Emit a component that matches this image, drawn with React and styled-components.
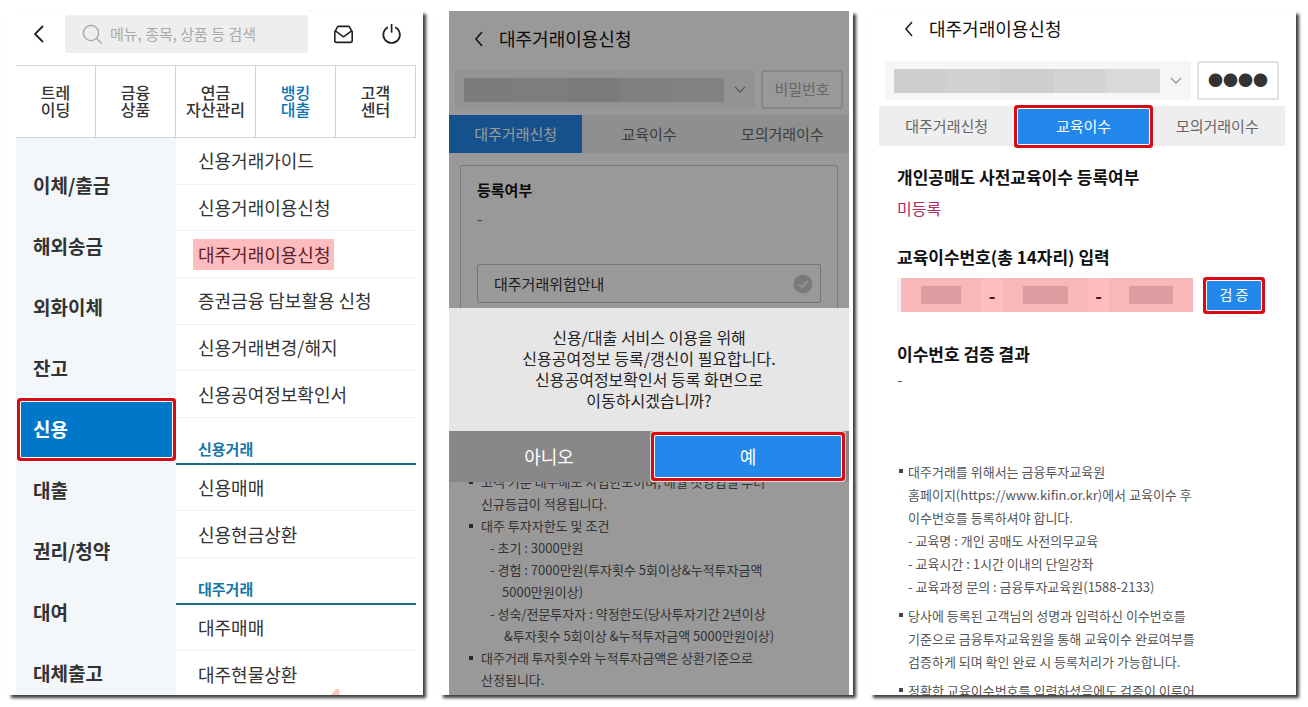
import styled, { createGlobalStyle, css } from "styled-components";

const GlobalStyle = createGlobalStyle`
  * {
    box-sizing: border-box;
  }

  body {
    margin: 0;
    background: #ffffff;
  }

  body, button, input, select {
    font-family: "Noto Sans CJK KR", "Noto Sans", sans-serif;
  }

  button {
    border: none;
    background: none;
    padding: 0;
    cursor: pointer;
  }

  a {
    color: inherit;
    text-decoration: none;
  }

  h1, h2, p, ul {
    margin: 0;
    padding: 0;
    list-style: none;
    font-weight: 400;
  }

  svg {
    display: block;
  }
`;

// red frame around the button to press next
const marked = css`
  border-radius: 1px;
  box-shadow: 0 0 0 1px #ffffff, 0 0 0 4px #d80b12, 0 0 0 5px #ffffffb0;
`;

const StyledPage = styled.main`
  display: grid;
  grid-template-columns: 415fr 413fr 426fr;
  grid-template-rows: minmax(0, 1fr);
  gap: 17px;
  height: 100vh;
  padding: 11px 12px 12px 8px;
`;

const StyledPanel = styled.section`
  position: relative;
  min-width: 0;
  padding: ${(props) => props.$padding};
  background: #ffffff;
  box-shadow: 3px 3px 3px #3c3c3c;
`;

const StyledScreen = styled.div`
  position: relative;
  height: 100%;
  overflow: hidden;
`;

/* menu screen */

const StyledSearchBar = styled.header`
  display: flex;
  align-items: center;
  gap: 18px;
  padding: 4px 14px 12px 15px;
`;

const StyledSearch = styled.label`
  display: flex;
  flex: 1;
  align-items: center;
  gap: 7px;
  min-width: 0;
  height: 38px;
  padding: 0 17px;
  border-radius: 3px;
  background: #eeeeee;
`;

const StyledSearchInput = styled.input`
  flex: 1;
  min-width: 0;
  padding: 0 0 2px;
  border: none;
  outline: none;
  background: none;
  font-size: 15px;

  &::placeholder {
    color: #aaaaaa;
  }
`;

const StyledIcons = styled.div`
  display: flex;
  gap: 26px;
  margin-left: 6px;
`;

const StyledNav = styled.nav`
  display: grid;
  grid-template-columns: repeat(5, 1fr);
  border: 1px solid #d4d4d4;
  border-width: 1px 0;
`;

const StyledNavLink = styled.a`
  padding: 18px 0 19px;
  border-right: 1px solid #d4d4d4;
  text-align: center;
  white-space: pre-line;
  font-size: 16px;
  font-weight: 500;
  line-height: 17px;
  color: ${(props) => (props.$active ? "#0b75b3" : "#333333")};
`;

const StyledMenu = styled.div`
  display: grid;
  grid-template-columns: 2fr 3fr;
`;

const StyledCategories = styled.div`
  padding-top: 17px;
  background: #f3f7fa;
`;

const StyledCategory = styled.button`
  display: block;
  width: 100%;
  height: 61px;
  padding: 0 0 3px 17px;
  text-align: left;
  font-size: 19px;
  font-weight: 700;
  color: #333333;

  ${(props) =>
    props.$active &&
    css`
      width: calc(100% - 9px);
      height: 55px;
      margin: 3px 4px 3px 5px;
      padding-left: 12px;
      background: #0077c8;
      color: #ffffff;
      ${marked}
    `}
`;

const StyledItems = styled.div`
  display: grid;
  grid-template-rows: repeat(12, 1fr);
  height: 560px;
`;

const StyledItem = styled.a`
  display: flex;
  align-items: center;
  padding-left: 22px;
  border-bottom: 1px solid #f1f1f1;
  font-size: 18px;
  line-height: 31px;
  color: #333333;
`;

const StyledPinkMark = styled.span`
  margin-left: -5px;
  padding: 0 4px 0 5px;
  background: #ffbcbf;
  color: #5c1f27;
`;

const StyledItemHeading = styled.h2`
  padding: 20px 0 0 22px;
  border-bottom: 2px solid #1d6c8c;
  font-size: 15px;
  font-weight: 700;
  line-height: 22px;
  color: #1477a8;
`;

const StyledFloatTip = styled.svg`
  position: absolute;
  right: 75px;
  bottom: 0;
`;

/* short selling screens */

const StyledHeader = styled.header`
  display: flex;
  align-items: center;
  gap: 15px;
  height: ${(props) => props.$height};
  margin-bottom: ${(props) => props.$gap};
  padding-left: 25px;
`;

const StyledTitle = styled.h1`
  padding-bottom: 2px;
  font-size: 18px;
  line-height: 24px;
  color: #111111;
`;

const StyledAccountRow = styled.div`
  display: flex;
  gap: 6px;
  height: 39px;
  margin: 0 6px 6px;
`;

const StyledAccount = styled.label`
  display: flex;
  flex: 1;
  align-items: center;
  gap: 10px;
  min-width: 0;
  padding: 0 9px;
  border-radius: 3px;
  background: #f6f6f6;
`;

const StyledAccountSelect = styled.select`
  flex: 1;
  min-width: 0;
  height: 24px;
  border: none;
  appearance: none;
  background: linear-gradient(
    90deg,
    #cfcfcf 20%,
    #d1d1d1 20% 40%,
    #cecece 40% 60%,
    #d4d4d4 60% 80%,
    #d9d9d9 80%
  );
`;

const StyledPassword = styled.input`
  width: 82px;
  padding: 0 0 2px;
  border: 2px solid #e2e2e2;
  border-radius: 3px;
  background: #ffffff;
  text-align: center;
  font-size: 15px;
  color: #333333;

  &::placeholder {
    color: #aaaaaa;
  }
`;

const StyledTabs = styled.div`
  display: grid;
  grid-template-columns: repeat(3, 1fr);
  height: ${(props) => props.$height};
  background: #eeeeee;
`;

const StyledTab = styled.button`
  padding-bottom: 2px;
  font-size: 15px;
  color: #666666;

  ${(props) =>
    props.$active &&
    css`
      background: #2388ec;
      color: #ffffff;
    `}

  ${(props) =>
    props.$marked &&
    css`
      margin: 3px 1px 2px 4px;
      ${marked}
    `}
`;

const StyledCard = styled.div`
  min-height: 280px;
  margin: 12px 11px 26px;
  padding: 12px 16px;
  border: 1px solid #cccccc;
  border-radius: 2px;
`;

const StyledCardTitle = styled.h2`
  font-size: 15px;
  font-weight: 700;
  line-height: 24px;
  color: #111111;
`;

const StyledValue = styled.p`
  margin-top: ${(props) => props.$space};
  font-size: 16px;
  line-height: 24px;
  color: ${(props) => props.$color || "#666666"};
`;

const StyledAgreement = styled.button`
  display: flex;
  align-items: center;
  justify-content: space-between;
  width: 100%;
  height: 39px;
  margin-top: 34px;
  padding: 0 7px 0 16px;
  border: 1px solid #c4c4c4;
  border-radius: 2px;
  font-size: 15px;
  line-height: 20px;
  color: #333333;
`;

const StyledNotes = styled.ul`
  padding: ${(props) => props.$padding};
  font-size: 13px;
  line-height: ${(props) => props.$line};
  color: #555555;
`;

const StyledNote = styled.li`
  display: flex;
  gap: ${(props) => props.$gap};
  margin-bottom: ${(props) => props.$space || "0"};
  white-space: nowrap;

  &::before {
    content: "";
    flex: none;
    width: 4px;
    height: 4px;
    margin-top: 9px;
    background: #444444;
  }
`;

const StyledSubLine = styled.div`
  padding-left: ${(props) => props.$indent || "0"};
`;

const StyledOverlay = styled.div`
  position: absolute;
  inset: 0;
  display: flex;
  align-items: center;
  padding-top: 84px;
  background: rgba(0, 0, 0, 0.4);
`;

const StyledDialog = styled.div`
  width: 100%;
  background: #e6e6e6;
`;

const StyledMessage = styled.p`
  padding: 19px 0 20px;
  text-align: center;
  white-space: pre-line;
  font-size: 16px;
  line-height: 21px;
  color: #222222;
`;

const StyledDialogButtons = styled.div`
  display: grid;
  grid-template-columns: 1fr 1fr;
  height: 51px;
  background: #888888;
`;

const StyledDialogButton = styled.button`
  padding-bottom: 2px;
  font-size: 18px;
  color: #ffffff;

  ${(props) =>
    props.$primary &&
    css`
      margin: 5px 8px 5px 6px;
      background: #2388ec;
      ${marked}
    `}
`;

const StyledForm = styled.div`
  padding: 0 18px;
`;

const StyledFormTitle = styled.h2`
  margin-top: ${(props) => props.$space};
  font-size: 17px;
  font-weight: 700;
  line-height: 26px;
  color: #111111;
`;

const StyledCodeRow = styled.div`
  display: flex;
  align-items: center;
  justify-content: space-between;
  margin-top: 8px;
`;

const StyledCode = styled.div`
  display: grid;
  grid-template-columns: 80fr 22fr 85fr 21fr 84fr;
  align-items: center;
  width: 296px;
  height: 34px;
  border-left: 4px solid #f2f2f2;
  background: #ffbdbd;
  text-align: center;
  font-size: 18px;
  font-weight: 700;
  line-height: 34px;
  color: #4a1015;
`;

const StyledCodeInput = styled.input`
  width: 100%;
  height: 34px;
  border: solid #f8b8b9;
  border-width: 8px 20px;
  border-radius: 0;
  background: #dd9da0;
`;

const StyledVerify = styled.button`
  width: 54px;
  height: 29px;
  margin-right: 6px;
  padding-bottom: 2px;
  background: #2388ec;
  font-size: 14px;
  color: #ffffff;
  ${marked}
`;

const navLinks = ["트레\n이딩", "금융\n상품", "연금\n자산관리", "뱅킹\n대출", "고객\n센터"];

const categories = [
  "이체/출금",
  "해외송금",
  "외화이체",
  "잔고",
  "신용",
  "대출",
  "권리/청약",
  "대여",
  "대체출고",
];

const items = [
  { text: "신용거래가이드" },
  { text: "신용거래이용신청" },
  { text: "대주거래이용신청", marked: true },
  { text: "증권금융 담보활용 신청" },
  { text: "신용거래변경/해지" },
  { text: "신용공여정보확인서" },
  { text: "신용거래", heading: true },
  { text: "신용매매" },
  { text: "신용현금상환" },
  { text: "대주거래", heading: true },
  { text: "대주매매" },
  { text: "대주현물상환" },
];

const tabs = ["대주거래신청", "교육이수", "모의거래이수"];

function Chevron({ width, height, points, color = "#222222", stroke = 1.6 }) {
  return (
    <svg width={width} height={height} fill="none" stroke={color} strokeWidth={stroke}>
      <polyline points={points} />
    </svg>
  );
}

function MenuPanel() {
  return (
    <StyledPanel $padding="0 7px 0 8px">
      <StyledScreen>
        <StyledSearchBar>
          <button aria-label="뒤로">
            <Chevron width={16} height={20} points="12,2 4,10 12,18" stroke={1.8} />
          </button>
          <StyledSearch>
            <svg width="21" height="20" fill="none" stroke="#a6a6a6" strokeWidth="1.4">
              <circle cx="9" cy="9" r="7.6" />
              <path d="M14.4 14.4 L20 19.4" />
            </svg>
            <StyledSearchInput placeholder="메뉴, 종목, 상품 등 검색" />
          </StyledSearch>
          <StyledIcons>
            <button aria-label="메시지">
              <svg width="22" height="22" fill="none" stroke="#222222" strokeWidth="1.6" strokeLinejoin="round">
                <path d="M3 8.6 L5.4 4.2 Q5.8 3.4 6.8 3.4 H16.2 Q17.2 3.4 17.6 4.2 L20 8.6" />
                <path d="M2.8 9.2 Q2.8 7.6 4.4 8.6 L11.5 13.8 L18.6 8.6 Q20.2 7.6 20.2 9.2 V17.6 Q20.2 19.4 18.4 19.4 H4.6 Q2.8 19.4 2.8 17.6 Z" />
              </svg>
            </button>
            <button aria-label="종료">
              <svg width="22" height="22" fill="none" stroke="#222222" strokeWidth="1.7">
                <path d="M8 4.2 A8.3 8.3 0 1 0 15.2 4.2" />
                <path d="M11.6 1 V9.6" />
              </svg>
            </button>
          </StyledIcons>
        </StyledSearchBar>
        <StyledNav>
          {navLinks.map((text, i) => (
            <StyledNavLink key={text} href="#" $active={i === 3}>
              {text}
            </StyledNavLink>
          ))}
        </StyledNav>
        <StyledMenu>
          <StyledCategories>
            {categories.map((text) => (
              <StyledCategory key={text} $active={text === "신용"}>
                {text}
              </StyledCategory>
            ))}
          </StyledCategories>
          <StyledItems>
            {items.map((item) =>
              item.heading ? (
                <StyledItemHeading key={item.text}>{item.text}</StyledItemHeading>
              ) : (
                <StyledItem key={item.text} href="#">
                  {item.marked ? (
                    <StyledPinkMark>{item.text}</StyledPinkMark>
                  ) : (
                    item.text
                  )}
                </StyledItem>
              )
            )}
          </StyledItems>
        </StyledMenu>
        <StyledFloatTip width="10" height="6" fill="#f6c9bd">
          <path d="M0 6 L5 0 L8 0 L9 6 Z" />
        </StyledFloatTip>
      </StyledScreen>
    </StyledPanel>
  );
}

function TopArea({ headerHeight, headerGap, tabHeight, active, frame, password }) {
  return (
    <>
      <StyledHeader $height={headerHeight} $gap={headerGap}>
        <button aria-label="뒤로">
          <Chevron width={10} height={16} points="8,1 2,8 8,15" />
        </button>
        <StyledTitle>대주거래이용신청</StyledTitle>
      </StyledHeader>
      <StyledAccountRow>
        <StyledAccount>
          <StyledAccountSelect aria-label="계좌" />
          <Chevron width={12} height={8} points="1,1 6,6 11,1" color="#999999" stroke={1.4} />
        </StyledAccount>
        <StyledPassword
          aria-label="비밀번호"
          placeholder="비밀번호"
          defaultValue={password}
        />
      </StyledAccountRow>
      <StyledTabs $height={tabHeight}>
        {tabs.map((text, i) => (
          <StyledTab key={text} $active={i === active} $marked={frame && i === active}>
            {text}
          </StyledTab>
        ))}
      </StyledTabs>
    </>
  );
}

function ApplyPanel() {
  return (
    <StyledPanel $padding="0 4px 0 9px">
      <StyledScreen>
        <TopArea headerHeight="56px" headerGap="3px" tabHeight="38px" active={0} />
        <StyledCard>
          <StyledCardTitle>등록여부</StyledCardTitle>
          <StyledValue $space="4px">-</StyledValue>
          <StyledAgreement>
            대주거래위험안내
            <svg width="20" height="20" fill="none">
              <circle cx="10" cy="10" r="9.5" fill="#cccccc" />
              <path d="M5.5 10.2 L8.8 13.4 L14.6 7" stroke="#f4f4f4" strokeWidth="1.8" />
            </svg>
          </StyledAgreement>
        </StyledCard>
        <StyledNotes $padding="0 0 0 20px" $line="22px">
          <StyledNote $gap="8px">
            <div>
              고객 기준 대주매도 차입한도이며, 매월 첫영업일 부터
              <br />
              신규등급이 적용됩니다.
            </div>
          </StyledNote>
          <StyledNote $gap="8px">
            <div>
              대주 투자자한도 및 조건
              <StyledSubLine $indent="9px">- 초기 : 3000만원</StyledSubLine>
              <StyledSubLine $indent="9px">
                - 경험 : 7000만원(투자횟수 5회이상&누적투자금액
              </StyledSubLine>
              <StyledSubLine $indent="21px">5000만원이상)</StyledSubLine>
              <StyledSubLine $indent="9px">
                - 성숙/전문투자자 : 약정한도(당사투자기간 2년이상
              </StyledSubLine>
              <StyledSubLine $indent="23px">
                &투자횟수 5회이상 &누적투자금액 5000만원이상)
              </StyledSubLine>
            </div>
          </StyledNote>
          <StyledNote $gap="8px">
            <div>
              대주거래 투자횟수와 누적투자금액은 상환기준으로
              <br />
              산정됩니다.
            </div>
          </StyledNote>
        </StyledNotes>
        <StyledOverlay>
          <StyledDialog role="dialog">
            <StyledMessage>
              {"신용/대출 서비스 이용을 위해\n신용공여정보 등록/갱신이 필요합니다.\n신용공여정보확인서 등록 화면으로\n이동하시겠습니까?"}
            </StyledMessage>
            <StyledDialogButtons>
              <StyledDialogButton>아니오</StyledDialogButton>
              <StyledDialogButton $primary>예</StyledDialogButton>
            </StyledDialogButtons>
          </StyledDialog>
        </StyledOverlay>
      </StyledScreen>
    </StyledPanel>
  );
}

function EducationPanel() {
  return (
    <StyledPanel $padding="0 11px 0 9px">
      <StyledScreen>
        <TopArea
          headerHeight="36px"
          headerGap="14px"
          tabHeight="40px"
          active={1}
          frame
          password="●●●●"
        />
        <StyledForm>
          <StyledFormTitle $space="18px">개인공매도 사전교육이수 등록여부</StyledFormTitle>
          <StyledValue $space="6px" $color="#b02a60">미등록</StyledValue>
          <StyledFormTitle $space="24px">교육이수번호(총 14자리) 입력</StyledFormTitle>
          <StyledCodeRow>
            <StyledCode>
              <StyledCodeInput aria-label="교육이수번호 1" />
              <span>-</span>
              <StyledCodeInput aria-label="교육이수번호 2" />
              <span>-</span>
              <StyledCodeInput aria-label="교육이수번호 3" />
            </StyledCode>
            <StyledVerify>검 증</StyledVerify>
          </StyledCodeRow>
          <StyledFormTitle $space="29px">이수번호 검증 결과</StyledFormTitle>
          <StyledValue $space="0">-</StyledValue>
        </StyledForm>
        <StyledNotes $padding="69px 0 0 20px" $line="23px">
          <StyledNote $gap="5px" $space="6px">
            <div>
              대주거래를 위해서는 금융투자교육원
              <br />
              홈페이지(https://www.kifin.or.kr)에서 교육이수 후
              <br />
              이수번호를 등록하셔야 합니다.
              <StyledSubLine>- 교육명 : 개인 공매도 사전의무교육</StyledSubLine>
              <StyledSubLine>- 교육시간 : 1시간 이내의 단일강좌</StyledSubLine>
              <StyledSubLine>- 교육과정 문의 : 금융투자교육원(1588-2133)</StyledSubLine>
            </div>
          </StyledNote>
          <StyledNote $gap="5px" $space="6px">
            <div>
              당사에 등록된 고객님의 성명과 입력하신 이수번호를
              <br />
              기준으로 금융투자교육원을 통해 교육이수 완료여부를
              <br />
              검증하게 되며 확인 완료 시 등록처리가 가능합니다.
            </div>
          </StyledNote>
          <StyledNote $gap="5px">
            <div>정확한 교육이수번호를 입력하셨음에도 검증이 이루어</div>
          </StyledNote>
        </StyledNotes>
      </StyledScreen>
    </StyledPanel>
  );
}

function App() {
  return (
    <>
      <GlobalStyle />
      <StyledPage>
        <MenuPanel />
        <ApplyPanel />
        <EducationPanel />
      </StyledPage>
    </>
  );
}

export default App;
